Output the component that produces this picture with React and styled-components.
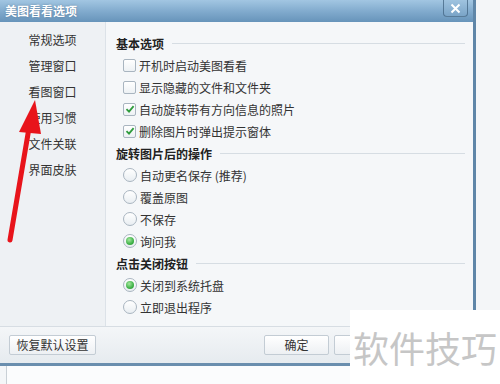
import React from 'react';
import styled, { createGlobalStyle } from 'styled-components';

const GlobalStyle = createGlobalStyle`
  html, body { margin: 0; padding: 0; }
  body {
    width: 500px;
    height: 384px;
    overflow: hidden;
    background: #f4f6f8;
    font-family: "Noto Sans CJK SC", "Noto Sans", sans-serif;
    font-size: 12px;
    color: #333;
  }
`;

const Page = styled.div`
  position: relative;
  width: 500px;
  height: 384px;
  display: flex;
  flex-direction: column;
`;

const Window = styled.div`
  width: 473px;
  height: 363px;
  display: flex;
  flex-direction: column;
  border-right: 3px solid #5f86a8;
  border-bottom: 3px solid #6a8eae;
  background: #f5f7f9;
`;

const TitleBar = styled.div`
  height: 22px;
  flex: none;
  display: flex;
  align-items: flex-start;
  justify-content: space-between;
  padding-left: 5px;
  background: linear-gradient(#a2c6e2, #7fa9cc 55%, #6794ba);
  color: #fff;
`;

const Title = styled.span`
  line-height: 22px;
  font-size: 12px;
  font-weight: bold;
  text-shadow: 0 0 2px rgba(40, 70, 100, 0.5);
`;

const CloseButton = styled.div`
  width: 23px;
  height: 16px;
  margin-right: 5px;
  display: flex;
  align-items: center;
  justify-content: center;
  border: 1px solid rgba(60, 95, 125, 0.7);
  border-top: none;
  border-radius: 0 0 4px 4px;
  background: linear-gradient(#9fc3df, #7aa4c7);
`;

const Body = styled.div`
  flex: 1;
  display: flex;
  min-height: 0;
`;

const Sidebar = styled.div`
  width: 105px;
  flex: none;
  padding-top: 5px;
  background: #eef1f4;
  border-right: 1px solid #dce2e8;
  display: flex;
  flex-direction: column;
`;

const NavItem = styled.div`
  height: 26px;
  line-height: 26px;
  text-align: center;
  color: #333;
`;

const Content = styled.div`
  flex: 1;
  padding: 10px 8px 0 10px;
  display: flex;
  flex-direction: column;
`;

const SectionHeader = styled.div`
  height: 22px;
  display: flex;
  align-items: center;
  gap: 8px;
  font-weight: bold;
  color: #222;

  &::after {
    content: '';
    flex: 1;
    height: 1px;
    background: #d6dde3;
  }
`;

const OptionRow = styled.label`
  height: 22px;
  display: flex;
  align-items: center;
  gap: 3px;
  padding-left: 7px;
  color: #333;
`;

const Box = styled.span`
  width: 11px;
  height: 11px;
  border: 1px solid #a9b5c0;
  border-radius: 2px;
  background: linear-gradient(#ffffff, #edf1f4);
  display: flex;
  align-items: center;
  justify-content: center;
`;

const Radio = styled.span`
  width: 12px;
  height: 12px;
  border: 1px solid #a9b5c0;
  border-radius: 50%;
  background: linear-gradient(#ffffff, #e9eef2);
  display: flex;
  align-items: center;
  justify-content: center;

  &::after {
    content: '';
    display: ${(p) => (p.$on ? 'block' : 'none')};
    width: 8px;
    height: 8px;
    border-radius: 50%;
    background: radial-gradient(circle at 40% 35%, #a6e7a0, #3fb248 60%, #2a8d33);
  }
`;

const BottomBar = styled.div`
  height: 36px;
  flex: none;
  border-top: 1px solid #d7dde3;
  background: linear-gradient(#f4f6f8, #e6ebef);
  display: flex;
  align-items: center;
  padding: 0 0 0 9px;
  gap: 5px;
`;

const Button = styled.div`
  width: ${(p) => p.$w}px;
  height: 18px;
  line-height: 18px;
  text-align: center;
  border: 1px solid #c3ccd4;
  border-radius: 2px;
  background: linear-gradient(#ffffff, #edf0f3);
  color: #333;
  margin-left: ${(p) => p.$ml || 0}px;
`;

const Below = styled.div`
  flex: 1;
  width: 470px;
  margin-left: 6px;
  border-left: 1px solid #c9d0d6;
  background: #fbfcfd;
`;

const Watermark = styled.div`
  position: absolute;
  left: 350px;
  top: 310px;
  width: 150px;
  height: 74px;
  background: #fff;
  display: flex;
  align-items: center;
  justify-content: center;
  font-size: 36px;
  color: #c6c6c6;
`;

const ArrowLayer = styled.svg`
  position: absolute;
  left: 0;
  top: 0;
  pointer-events: none;
`;

const Check = () => (
  <svg width="10" height="10" viewBox="0 0 10 10">
    <path d="M1.5 5.2 L4 7.6 L8.6 2.2" fill="none" stroke="#2e9b3c" strokeWidth="1.8" />
  </svg>
);

const nav = ['常规选项', '管理窗口', '看图窗口', '使用习惯', '文件关联', '界面皮肤'];

const basic = [
  ['开机时启动美图看看', false],
  ['显示隐藏的文件和文件夹', false],
  ['自动旋转带有方向信息的照片', true],
  ['删除图片时弹出提示窗体', true],
];

const rotate = [
  ['自动更名保存 (推荐)', false],
  ['覆盖原图', false],
  ['不保存', false],
  ['询问我', true],
];

const closeOpts = [
  ['关闭到系统托盘', true],
  ['立即退出程序', false],
];

export default function App() {
  return (
    <Page>
      <GlobalStyle />
      <Window>
        <TitleBar>
          <Title>美图看看选项</Title>
          <CloseButton>
            <svg width="11" height="11" viewBox="0 0 11 11">
              <path d="M1.5 1.5 L9.5 9.5 M9.5 1.5 L1.5 9.5" stroke="#fff" strokeWidth="2" />
            </svg>
          </CloseButton>
        </TitleBar>
        <Body>
          <Sidebar>
            {nav.map((n) => (
              <NavItem key={n}>{n}</NavItem>
            ))}
          </Sidebar>
          <Content>
            <SectionHeader>基本选项</SectionHeader>
            {basic.map(([t, on]) => (
              <OptionRow key={t}>
                <Box>{on && <Check />}</Box>
                {t}
              </OptionRow>
            ))}
            <SectionHeader>旋转图片后的操作</SectionHeader>
            {rotate.map(([t, on]) => (
              <OptionRow key={t}>
                <Radio $on={on} />
                {t}
              </OptionRow>
            ))}
            <SectionHeader>点击关闭按钮</SectionHeader>
            {closeOpts.map(([t, on]) => (
              <OptionRow key={t}>
                <Radio $on={on} />
                {t}
              </OptionRow>
            ))}
          </Content>
        </Body>
        <BottomBar>
          <Button $w={85}>恢复默认设置</Button>
          <Button $w={63} $ml={163}>确定</Button>
          <Button $w={63} />
        </BottomBar>
      </Window>
      <Below />
      <ArrowLayer width="500" height="384" viewBox="0 0 500 384">
        <path d="M10 240 L29 128" stroke="#e8141b" strokeWidth="5" strokeLinecap="round" />
        <path d="M35 100 L19 132 L41 134 Z" fill="#e8141b" />
      </ArrowLayer>
      <Watermark>软件技巧</Watermark>
    </Page>
  );
}
